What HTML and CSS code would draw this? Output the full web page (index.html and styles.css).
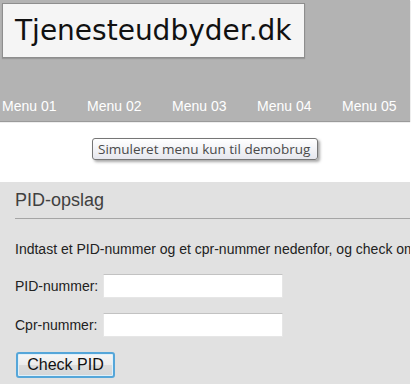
FILE: index.html
```html
<!DOCTYPE html>
<html lang="da">
<head>
<meta charset="utf-8">
<title>PID-opslag</title>
<link rel="stylesheet" href="styles.css">
</head>
<body>
<div class="page">
  <header class="header">
    <div class="logo">Tjenesteudbyder.dk</div>
    <nav class="menu">
      <span class="menu-item">Menu 01</span>
      <span class="menu-item">Menu 02</span>
      <span class="menu-item">Menu 03</span>
      <span class="menu-item">Menu 04</span>
      <span class="menu-item">Menu 05</span>
    </nav>
  </header>
  <div class="tip-area">
    <div class="tooltip">Simuleret menu kun til demobrug</div>
  </div>
  <main class="content">
    <h2 class="title">PID-opslag</h2>
    <p class="intro">Indtast et PID-nummer og et cpr-nummer nedenfor, og check om de passer sammen.</p>
    <div class="row">
      <label class="label" for="pid">PID-nummer:</label>
      <input class="field" id="pid" type="text">
    </div>
    <div class="row">
      <label class="label" for="cpr">Cpr-nummer:</label>
      <input class="field" id="cpr" type="text">
    </div>
    <div class="row">
      <button class="btn" type="button">Check PID</button>
    </div>
  </main>
</div>
</body>
</html>
```

FILE: styles.css
```css
html, body {
  margin: 0;
  padding: 0;
  background: #ffffff;
  overflow: hidden;
}

.page {
  width: 410px;
  height: 384px;
  display: flex;
  flex-direction: column;
  font-family: "Liberation Sans", Arial, sans-serif;
}

.header {
  background: #b3b3b3;
  height: 121px;
  box-sizing: border-box;
  padding-top: 3px;
  box-shadow: 0 1px 1px #9a9a9a;
  display: flex;
  flex-direction: column;
}

.logo {
  margin-left: 2px;
  width: 303px;
  height: 55px;
  box-sizing: border-box;
  border: 1px solid #8e8e8e;
  background: #f5f5f5;
  box-shadow: 0 1px 1px rgba(0,0,0,0.15);
  font-family: "DejaVu Sans", Verdana, sans-serif;
  font-size: 28px;
  line-height: 53px;
  color: #111;
  padding-left: 12px;
  white-space: nowrap;
}

.menu {
  display: flex;
  padding-left: 2px;
  margin-top: 40px;
  overflow: hidden;
}

.menu-item {
  flex: 0 0 85px;
  font-size: 14px;
  line-height: 16px;
  color: #ffffff;
  white-space: nowrap;
}

.tip-area {
  height: 61px;
  box-sizing: border-box;
  padding-top: 17px;
  padding-left: 92px;
}

.tooltip {
  display: inline-block;
  height: 22px;
  box-sizing: border-box;
  padding: 0 7px 0 5px;
  border: 1px solid #767676;
  border-radius: 3px;
  background: linear-gradient(#ffffff, #e6e7ee);
  box-shadow: 2px 2px 3px rgba(0,0,0,0.35);
  font-family: "Open Sans", "Noto Sans", sans-serif;
  font-size: 13.5px;
  line-height: 20px;
  color: #4a4a4a;
  white-space: nowrap;
}

.content {
  flex: 1;
  background: #e1e1e1;
  padding: 8px 0 0 15px;
  overflow: hidden;
}

.title {
  margin: 0;
  font-size: 18px;
  font-weight: normal;
  line-height: 21px;
  color: #404040;
  padding-bottom: 7px;
  border-bottom: 1px solid #a5a5a5;
}

.intro {
  margin: 22px 0 0 0;
  font-size: 14px;
  line-height: 16px;
  color: #222;
  white-space: nowrap;
}

.row {
  display: flex;
  align-items: center;
  height: 24px;
  margin-top: 15px;
}

.intro + .row {
  margin-top: 17px;
}

.label {
  width: 88px;
  font-size: 14px;
  line-height: 16px;
  color: #222;
}

.field {
  width: 180px;
  height: 24px;
  box-sizing: border-box;
  margin: 0;
  border: 1px solid #e6e6e6;
  border-top-color: #c2c2c2;
  background: #ffffff;
  padding: 0 3px;
}

.btn {
  margin: 2px 0 0 1px;
  width: 99px;
  height: 26px;
  box-sizing: border-box;
  border: 2px solid #55a6d9;
  border-radius: 3px;
  background: linear-gradient(#f6f6f6 0%, #ececec 50%, #dcdcdc 51%, #d4d6d8 100%);
  box-shadow: inset 0 0 0 1px #dff0fa;
  font-family: "Liberation Sans", Arial, sans-serif;
  font-size: 16px;
  color: #111;
  padding: 0;
}
```
